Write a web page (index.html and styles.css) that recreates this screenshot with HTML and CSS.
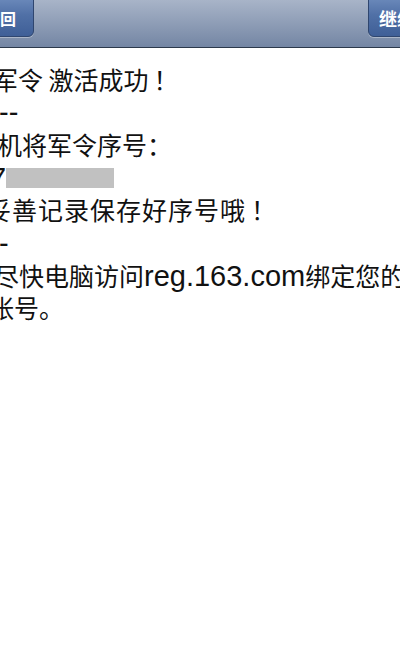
FILE: index.html
```html
<!DOCTYPE html>
<html lang="zh-CN">
<head>
    <meta charset="UTF-8">
    <meta name="viewport" content="width=device-width, initial-scale=1.0">
    <title>将军令</title>
    <link rel="stylesheet" href="styles.css">
</head>
<body>
    <div class="screen">
        <div class="navbar">
            <button class="nav-btn back">返回</button>
            <button class="nav-btn next">继续</button>
        </div>
        <div class="message">
            <p class="line shift-a">军令 激活成功<span class="punct excl">！</span></p>
            <p class="line shift-dash"><span class="latin">--</span></p>
            <p class="line shift-b">机将军令序号：</p>
            <p class="line shift-seven"><span class="latin">7</span><span class="redacted"></span></p>
            <p class="line shift-c">妥善记录保存好序号哦<span class="punct excl">！</span></p>
            <p class="line shift-dash"><span class="latin">-</span></p>
            <p class="line shift-d">尽快电脑访问<span class="latin">reg.163.com</span>绑定您的</p>
            <p class="line shift-e">张号<span class="punct">。</span></p>
        </div>
    </div>
</body>
</html>
```
FILE: styles.css
```css
html, body { margin: 0; padding: 0; background: #fff; }
body { font-family: "Noto Sans CJK SC", sans-serif; color: #111; }
.screen { width: 400px; height: 650px; overflow: hidden; }

.navbar {
    height: 47px;
    border-bottom: 1px solid #2c394b;
    background: linear-gradient(#a8b4c8, #8e9db6 50%, #7486a4);
    display: flex;
    justify-content: space-between;
    align-items: flex-start;
    overflow: hidden;
}
.nav-btn {
    height: 44px;
    margin-top: -7px;
    border: 1px solid #2f466f;
    border-radius: 6px;
    background: linear-gradient(#7290c0, #5070a6 50%, #3f5f97);
    box-shadow: 0 1px 0 rgba(255, 255, 255, 0.35);
    color: #fff;
    font-family: "Noto Sans CJK SC", sans-serif;
    font-weight: bold;
    font-size: 16px;
    padding-top: 6px;
    white-space: nowrap;
    flex-shrink: 0;
}
.nav-btn.back { margin-left: -29px; padding-left: 12px; padding-right: 17px; }
.nav-btn.next { margin-right: -26px; padding-left: 10px; padding-right: 10px; font-size: 18px; }

.message {
    padding-top: 14.5px;
    display: grid;
    grid-auto-rows: 32.7px;
    font-size: 25px;
    line-height: 32.7px;
}
.line { margin: 0; white-space: nowrap; }
.latin { font-family: "Liberation Sans", sans-serif; font-size: 29px; }
.punct { font-family: "Noto Sans CJK TC", sans-serif; }
.punct.excl { padding-left: 5px; }
.redacted {
    display: inline-block;
    width: 108px;
    height: 20px;
    background: #c1c1c1;
    vertical-align: baseline;
}

.shift-a { margin-left: -7px; }
.shift-b { margin-left: -3px; }
.shift-c { margin-left: -14px; letter-spacing: 1px; }
.shift-d { margin-left: -6px; }
.shift-e { margin-left: -11px; }
.shift-dash { margin-left: -1px; }
.shift-seven { margin-left: -10px; }
```
